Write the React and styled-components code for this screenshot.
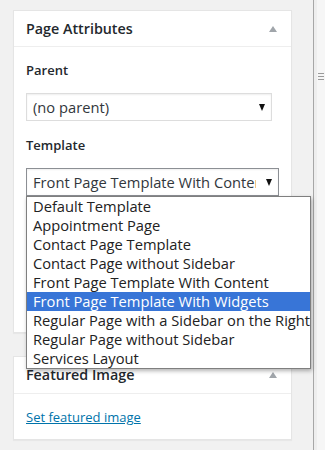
import React from "react";
import styled, { createGlobalStyle } from "styled-components";

const Global = createGlobalStyle`
  html, body { margin: 0; padding: 0; background: #f1f1f1; }
  body { font-family: "Open Sans", "Noto Sans", sans-serif; color: #444; }
  * { box-sizing: border-box; }
`;

const Page = styled.div`
  display: flex;
  width: 325px;
  height: 450px;
  overflow: hidden;
  background: #f1f1f1;
`;

const Column = styled.div`
  width: 313px;
  flex: none;
  padding: 10px 21px 0 13px;
  display: flex;
  flex-direction: column;
  gap: 23px;
`;

const Divider = styled.div`
  width: 1px;
  flex: none;
  background: #a7a7a7;
`;

const Strip = styled.div`
  flex: 1;
  background: #f6f6f6;
  border-left: 3px solid #eeeeee;
  padding-top: 73px;
  display: flex;
  flex-direction: column;
  align-items: center;
  gap: 2px;
`;

const GripLine = styled.span`
  display: block;
  width: 6px;
  height: 1px;
  background: #9a9a9a;
`;

const Panel = styled.section`
  background: #fff;
  border: 1px solid #e5e5e5;
  box-shadow: 0 1px 1px rgba(0, 0, 0, 0.04);
  width: 279px;
`;

const Header = styled.div`
  display: flex;
  align-items: center;
  justify-content: space-between;
  height: ${(p) => p.$h}px;
  padding: 0 12px;
  border-bottom: 1px solid #eeeeee;
`;

const Title = styled.h2`
  margin: 0;
  font-size: 14.3px;
  font-weight: 600;
  color: #23282d;
  line-height: 20px;
`;

const Toggle = styled.span`
  width: 0;
  height: 0;
  margin-right: 2px;
  border-left: 4px solid transparent;
  border-right: 4px solid transparent;
  border-bottom: 6px solid #a0a5aa;
`;

const Body = styled.div`
  padding: ${(p) => p.$pad};
`;

const Label = styled.p`
  margin: ${(p) => p.$mt}px 0 0;
  font-size: 13px;
  font-weight: 600;
  line-height: 20px;
  color: #23282d;
`;

const SelectWrap = styled.div`
  position: relative;
  margin-top: 13px;
  width: ${(p) => p.$w}px;
`;

const SelectBox = styled.div`
  height: 28px;
  border: 1px solid ${(p) => (p.$open ? "#8c8f94" : "#dddddd")};
  box-shadow: inset 0 1px 2px rgba(0, 0, 0, 0.07);
  background: #fff;
  display: flex;
  align-items: center;
  padding: 0 6px;
  gap: 10px;
  font-size: 14.7px;
  color: #32373c;
  white-space: nowrap;
`;

const SelectText = styled.span`
  flex: 1;
  overflow: hidden;
  text-overflow: clip;
`;

const Caret = styled.span`
  flex: none;
  width: 0;
  height: 0;
  border-left: 3.5px solid transparent;
  border-right: 3.5px solid transparent;
  border-top: 7px solid #111;
`;

const Dropdown = styled.ul`
  position: absolute;
  top: 28px;
  left: 0;
  width: 285px;
  margin: 0;
  padding: 0;
  list-style: none;
  background: #fff;
  border: 1px solid #7f7f7f;
  box-shadow: 1px 2px 4px rgba(0, 0, 0, 0.3);
  z-index: 10;
`;

const Option = styled.li`
  height: 19px;
  line-height: 19px;
  padding: 0 6px;
  font-size: 14.7px;
  white-space: nowrap;
  overflow: hidden;
  color: ${(p) => (p.$active ? "#fff" : "#222")};
  background: ${(p) => (p.$active ? "#3875d7" : "transparent")};
`;

const Link = styled.a`
  font-size: 13px;
  line-height: 20px;
  color: #0073aa;
  text-decoration: underline;
`;

const options = [
  "Default Template",
  "Appointment Page",
  "Contact Page Template",
  "Contact Page without Sidebar",
  "Front Page Template With Content",
  "Front Page Template With Widgets",
  "Regular Page with a Sidebar on the Right",
  "Regular Page without Sidebar",
  "Services Layout",
];

export default function App() {
  return (
    <>
      <Global />
      <Page>
        <Column>
          <Panel>
            <Header $h={36}>
              <Title>Page Attributes</Title>
              <Toggle />
            </Header>
            <Body $pad="0 12px 136px">
              <Label $mt={13}>Parent</Label>
              <SelectWrap $w={246}>
                <SelectBox>
                  <SelectText>(no parent)</SelectText>
                  <Caret />
                </SelectBox>
              </SelectWrap>
              <Label $mt={14}>Template</Label>
              <SelectWrap $w={253}>
                <SelectBox $open>
                  <SelectText>Front Page Template With Content</SelectText>
                  <Caret />
                </SelectBox>
                <Dropdown>
                  {options.map((o, i) => (
                    <Option key={o} $active={i === 5}>
                      {o}
                    </Option>
                  ))}
                </Dropdown>
              </SelectWrap>
            </Body>
          </Panel>
          <Panel>
            <Header $h={37}>
              <Title>Featured Image</Title>
              <Toggle />
            </Header>
            <Body $pad="11px 12px 12px">
              <Link href="#">Set featured image</Link>
            </Body>
          </Panel>
        </Column>
        <Divider />
        <Strip>
          <GripLine />
          <GripLine />
          <GripLine />
        </Strip>
      </Page>
    </>
  );
}
